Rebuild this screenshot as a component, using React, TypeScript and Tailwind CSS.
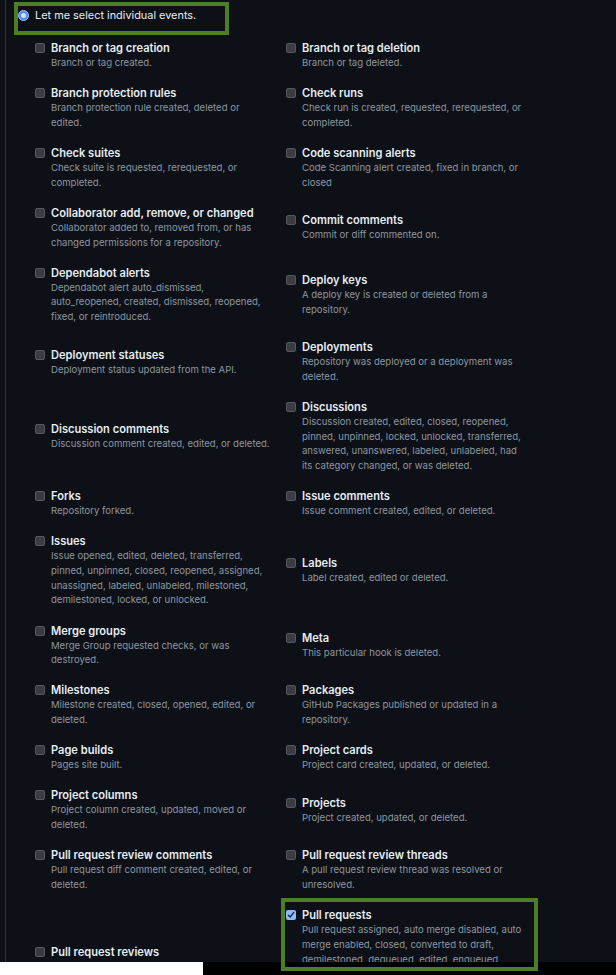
import React from "react";

type Ev = { t: string; d: string[]; checked?: boolean };

const rows: [Ev, Ev][] = [
  [
    { t: "Branch or tag creation", d: ["Branch or tag created."] },
    { t: "Branch or tag deletion", d: ["Branch or tag deleted."] },
  ],
  [
    { t: "Branch protection rules", d: ["Branch protection rule created, deleted or", "edited."] },
    { t: "Check runs", d: ["Check run is created, requested, rerequested, or", "completed."] },
  ],
  [
    { t: "Check suites", d: ["Check suite is requested, rerequested, or", "completed."] },
    { t: "Code scanning alerts", d: ["Code Scanning alert created, fixed in branch, or", "closed"] },
  ],
  [
    { t: "Collaborator add, remove, or changed", d: ["Collaborator added to, removed from, or has", "changed permissions for a repository."] },
    { t: "Commit comments", d: ["Commit or diff commented on."] },
  ],
  [
    { t: "Dependabot alerts", d: ["Dependabot alert auto_dismissed,", "auto_reopened, created, dismissed, reopened,", "fixed, or reintroduced."] },
    { t: "Deploy keys", d: ["A deploy key is created or deleted from a", "repository."] },
  ],
  [
    { t: "Deployment statuses", d: ["Deployment status updated from the API."] },
    { t: "Deployments", d: ["Repository was deployed or a deployment was", "deleted."] },
  ],
  [
    { t: "Discussion comments", d: ["Discussion comment created, edited, or deleted."] },
    {
      t: "Discussions",
      d: [
        "Discussion created, edited, closed, reopened,",
        "pinned, unpinned, locked, unlocked, transferred,",
        "answered, unanswered, labeled, unlabeled, had",
        "its category changed, or was deleted.",
      ],
    },
  ],
  [
    { t: "Forks", d: ["Repository forked."] },
    { t: "Issue comments", d: ["Issue comment created, edited, or deleted."] },
  ],
  [
    {
      t: "Issues",
      d: [
        "Issue opened, edited, deleted, transferred,",
        "pinned, unpinned, closed, reopened, assigned,",
        "unassigned, labeled, unlabeled, milestoned,",
        "demilestoned, locked, or unlocked.",
      ],
    },
    { t: "Labels", d: ["Label created, edited or deleted."] },
  ],
  [
    { t: "Merge groups", d: ["Merge Group requested checks, or was", "destroyed."] },
    { t: "Meta", d: ["This particular hook is deleted."] },
  ],
  [
    { t: "Milestones", d: ["Milestone created, closed, opened, edited, or", "deleted."] },
    { t: "Packages", d: ["GitHub Packages published or updated in a", "repository."] },
  ],
  [
    { t: "Page builds", d: ["Pages site built."] },
    { t: "Project cards", d: ["Project card created, updated, or deleted."] },
  ],
  [
    { t: "Project columns", d: ["Project column created, updated, moved or", "deleted."] },
    { t: "Projects", d: ["Project created, updated, or deleted."] },
  ],
  [
    { t: "Pull request review comments", d: ["Pull request diff comment created, edited, or", "deleted."] },
    { t: "Pull request review threads", d: ["A pull request review thread was resolved or", "unresolved."] },
  ],
  [
    { t: "Pull request reviews", d: ["Pull request review submitted, edited, or", "dismissed."] },
    {
      t: "Pull requests",
      checked: true,
      d: [
        "Pull request assigned, auto merge disabled, auto",
        "merge enabled, closed, converted to draft,",
        "demilestoned, dequeued, edited, enqueued,",
        "labeled, locked, milestoned, opened, ready for",
        "review, reopened, review request removed,",
        "review requested, synchronized, unassigned,",
        "unlabeled, or unlocked.",
      ],
    },
  ],
];

function Box({ checked }: { checked?: boolean }) {
  if (checked) {
    return (
      <span className="flex h-[10px] w-[10px] items-center justify-center rounded-[2px] bg-[#8fbcf5]">
        <svg width="8" height="8" viewBox="0 0 8 8">
          <path d="M1.3 4.2 L3.1 6 L6.7 1.6" fill="none" stroke="#1b2a44" strokeWidth="1.4" strokeLinecap="round" strokeLinejoin="round" />
        </svg>
      </span>
    );
  }
  return <span className="block h-[10px] w-[10px] rounded-[2px] border border-[#55585e] bg-[#3a3c41]" />;
}

function Item({ e }: { e: Ev }) {
  return (
    <div className="flex gap-[6px]">
      <div className="flex h-[16px] items-center">
        <Box checked={e.checked} />
      </div>
      <div className="flex flex-col">
        <div className="whitespace-nowrap text-[11.1px] font-semibold leading-[16px] text-[#e6edf3]">{e.t}</div>
        {e.d.map((l, i) => (
          <div key={i} className="whitespace-nowrap text-[9.55px] leading-[14.67px] text-[#8d96a0]">
            {l}
          </div>
        ))}
      </div>
    </div>
  );
}

export default function App() {
  return (
    <div className="relative h-[975px] w-[616px] overflow-hidden bg-black" style={{ fontFamily: "Inter, 'Liberation Sans', sans-serif" }}>
      <div className="relative h-[962px] overflow-hidden bg-[#0d1117]">
        <div className="ml-[5px] h-full border-l border-[#30363d]">
          <div className="flex items-center gap-[6px] pl-[12px] pt-[9px]">
            <span className="flex h-[11px] w-[11px] items-center justify-center rounded-full border border-[#9cc4fb] bg-[#4f8fe8]">
              <span className="h-[5px] w-[5px] rounded-full bg-[#cfe2ff]" />
            </span>
            <span className="text-[10.9px] leading-[13px] text-[#e6edf3]">Let me select individual events.</span>
          </div>
          <div className="mt-[18px] grid grid-cols-[251px_251px] items-center gap-y-[14.5px] pl-[29px]">
            {rows.map(([l, r], i) => (
              <React.Fragment key={i}>
                <Item e={l} />
                <Item e={r} />
              </React.Fragment>
            ))}
          </div>
        </div>
      </div>
      <div className="flex h-[13px]">
        <div className="h-full w-[203px] bg-white" />
        <div className="h-full flex-1 bg-black" />
      </div>
      <div className="pointer-events-none absolute left-[14px] top-[2px] h-[33px] w-[215px] border-[4px] border-[#4e7d28]" />
      <div className="pointer-events-none absolute left-[281px] top-[898px] h-[73px] w-[257px] border-[4px] border-[#4e7d28]" />
    </div>
  );
}
